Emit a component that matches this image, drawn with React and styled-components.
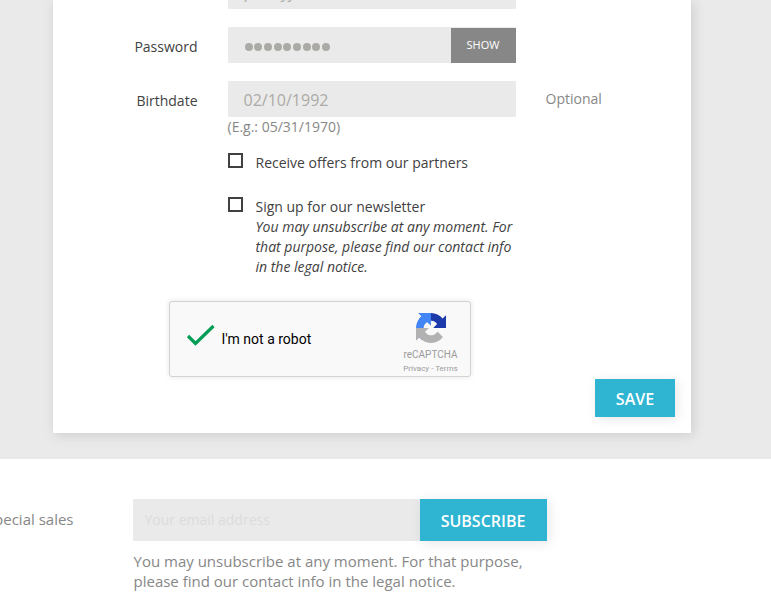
import React from 'react';
import styled, { createGlobalStyle } from 'styled-components';

const Global = createGlobalStyle`
  * { box-sizing: border-box; }
  body { margin: 0; background: #eaeaea; overflow: hidden; }
`;

const Page = styled.div`
  width: 771px;
  height: 597px;
  overflow: hidden;
  display: flex;
  flex-direction: column;
  background: #eaeaea;
  color: #414141;
  font-family: "Open Sans", "Noto Sans", sans-serif;
  font-size: 14px;
  line-height: 20px;
`;

const FormCard = styled.main`
  width: 638px;
  height: 433px;
  flex: none;
  margin: 0 0 26px 53px;
  background: #fff;
  box-shadow: 2px 2px 12px 0 rgba(0, 0, 0, 0.13);
  display: flex;
  flex-direction: column;
`;

const FormRow = styled.div`
  display: grid;
  grid-template-columns: 144.5px 288px 1fr;
  column-gap: 30px;
  height: ${(p) => p.$height}px;
  flex: none;
`;

const Label = styled.label`
  text-align: right;
  padding-top: 10px;
`;

const Field = styled.div`
  display: flex;
  align-items: center;
  height: 36px;
  margin: 0 -0.5px 0 0.5px;
  padding: 2px 0 0 15.5px;
  background: #eaeaea;
  color: #acaaa6;
  font-size: 16px;
`;

const ClippedField = styled(Field)`
  height: 9px;
  align-items: flex-end;
  overflow: hidden;
  padding: 0 0 7px 15.5px;
  line-height: 20px;
`;

const PasswordField = styled(Field)`
  padding-top: 0;
`;

const Dots = styled.div`
  display: flex;
  gap: 1.7px;
  flex: 1;
  padding: 4px 0 0 1px;
`;

const Dot = styled.i`
  width: 8px;
  height: 8px;
  border-radius: 50%;
  background: #acaaa6;
`;

const ShowButton = styled.button`
  align-self: flex-end;
  width: 65px;
  height: 35px;
  padding: 0 1px 2px 0;
  border: 0;
  background: #878787;
  color: #fff;
  font: 11px "Open Sans", sans-serif;
`;

const Hint = styled.div`
  color: #878787;
`;

const Optional = styled.div`
  padding-top: 8px;
  color: #878787;
`;

const CheckRow = styled.label`
  display: flex;
  gap: 12.5px;
  margin-left: 175px;
  height: ${(p) => p.$height}px;
  flex: none;
`;

const CheckBox = styled.span`
  width: 15px;
  height: 15px;
  flex: none;
  border: 2px solid #414141;
`;

const CheckText = styled.span`
  width: 262px;
`;

const Captcha = styled.section`
  display: flex;
  width: 302px;
  height: 76px;
  flex: none;
  margin: 0 0 2px 116px;
  border: 1px solid #d3d3d3;
  border-radius: 3px;
  background: #f9f9f9;
  box-shadow: 0 0 4px 1px rgba(0, 0, 0, 0.08);
  font-family: Roboto, sans-serif;
`;

const Tick = styled.svg`
  width: 30px;
  height: 26px;
  margin: 20px 5.5px 0 16px;
`;

const CaptchaText = styled.span`
  flex: 1;
  padding-top: 27px;
  color: #000;
`;

const CaptchaBrand = styled.div`
  display: flex;
  flex-direction: column;
  align-items: center;
  width: 79px;
  padding-top: 11px;
  color: #9b9b9b;
`;

const Logo = styled.svg`
  width: 30px;
  height: 30px;
`;

const BrandName = styled.span`
  font-size: 10px;
  line-height: 10px;
  margin-top: 7px;
`;

const BrandLinks = styled.span`
  font-size: 8px;
  line-height: 10px;
  margin-top: 4px;
`;

const PrimaryButton = styled.button`
  width: ${(p) => p.$width}px;
  height: ${(p) => p.$height}px;
  flex: none;
  padding: 2px 0 0;
  border: 0;
  background: #2fb5d2;
  color: #fff;
  font: 600 16px "Open Sans", sans-serif;
  box-shadow: 2px 2px 12px 0 rgba(0, 0, 0, 0.1);
`;

const SubscribeButton = styled(PrimaryButton)`
  padding-right: 1px;
`;

const FormActions = styled.div`
  display: flex;
  justify-content: flex-end;
  padding-right: 16px;
`;

const Footer = styled.footer`
  display: flex;
  flex: 1;
  padding-top: 40px;
  background: #fff;
  color: #878787;
  font-size: 15px;
`;

const FooterLead = styled.div`
  display: flex;
  justify-content: flex-end;
  width: 133px;
  padding: 10px 59.5px 0 0;
  white-space: nowrap;
  flex: none;
`;

const Subscribe = styled.form`
  width: 414px;
`;

const SubscribeBar = styled.div`
  display: flex;
  height: 42px;
  background: #eaeaea;
`;

const EmailField = styled.div`
  flex: 1;
  padding: 11px 0 0 11.5px;
  font-size: 14px;
  color: #dcdcdc;
`;

const Notice = styled.p`
  width: 400px;
  margin: 10px 0 0 0.5px;
`;

export default function App() {
  return (
    <Page>
      <Global />
      <FormCard>
        <FormRow $height={27}>
          <span />
          <ClippedField>presiyj</ClippedField>
        </FormRow>
        <FormRow $height={54}>
          <Label>Password</Label>
          <PasswordField>
            <Dots>
              {Array.from({ length: 9 }, (_, i) => <Dot key={i} />)}
            </Dots>
            <ShowButton type="button">SHOW</ShowButton>
          </PasswordField>
        </FormRow>
        <FormRow $height={72}>
          <Label>Birthdate</Label>
          <div>
            <Field>02/10/1992</Field>
            <Hint>(E.g.: 05/31/1970)</Hint>
          </div>
          <Optional>Optional</Optional>
        </FormRow>
        <CheckRow $height={44}>
          <CheckBox />
          <CheckText>Receive offers from our partners</CheckText>
        </CheckRow>
        <CheckRow $height={104}>
          <CheckBox />
          <CheckText>
            Sign up for our newsletter
            <br />
            <em>You may unsubscribe at any moment. For that purpose, please find our contact info in the legal notice.</em>
          </CheckText>
        </CheckRow>
        <Captcha>
          <Tick viewBox="0 0 30 26">
            <path d="M2 14 L9.5 21.5 L27.5 4" fill="none" stroke="#009e55" strokeWidth="3.2" />
          </Tick>
          <CaptchaText>I'm not a robot</CaptchaText>
          <CaptchaBrand>
            <Logo viewBox="0 0 64 64">
              <path fill="#1c3aa9" d="M64 31.955l-.016-1.37V4.687l-7.16 7.16C50.964 4.674 42.033.093 32.03.093c-10.4 0-19.635 4.96-25.458 12.64l11.736 11.86a15.55 15.55 0 0 1 4.754-5.334c2.05-1.6 4.952-2.906 8.968-2.906.485 0 .86.057 1.135.163 4.976.393 9.288 3.14 11.828 7.124l-8.307 8.307L64 31.953" />
              <path fill="#4285f4" d="M31.862.094l-1.37.016H4.594l7.16 7.16C4.58 13.147 0 22.08 0 32.046c0 10.4 4.96 19.635 12.64 25.458L24.5 45.768a15.55 15.55 0 0 1-5.334-4.754c-1.6-2.05-2.906-4.952-2.906-8.968 0-.485.057-.86.163-1.135.393-4.976 3.14-9.288 7.124-11.828l8.307 8.307L31.86.095" />
              <path fill="#b2b2b2" d="M.001 32.045l.016 1.37v25.898l7.16-7.16c5.86 7.173 14.79 11.754 24.793 11.754 10.4 0 19.635-4.96 25.458-12.64l-11.736-11.86a15.55 15.55 0 0 1-4.754 5.334c-2.05 1.6-4.952 2.906-8.968 2.906-.485 0-.86-.057-1.135-.163-4.976-.393-9.288-3.14-11.828-7.124l8.307-8.307L0 32.047" />
            </Logo>
            <BrandName>reCAPTCHA</BrandName>
            <BrandLinks>Privacy - Terms</BrandLinks>
          </CaptchaBrand>
        </Captcha>
        <FormActions>
          <PrimaryButton type="button" $width={80} $height={38}>SAVE</PrimaryButton>
        </FormActions>
      </FormCard>
      <Footer>
        <FooterLead>special sales</FooterLead>
        <Subscribe>
          <SubscribeBar>
            <EmailField>Your email address</EmailField>
            <SubscribeButton type="button" $width={127} $height={42}>SUBSCRIBE</SubscribeButton>
          </SubscribeBar>
          <Notice>You may unsubscribe at any moment. For that purpose, please find our contact info in the legal notice.</Notice>
        </Subscribe>
      </Footer>
    </Page>
  );
}
